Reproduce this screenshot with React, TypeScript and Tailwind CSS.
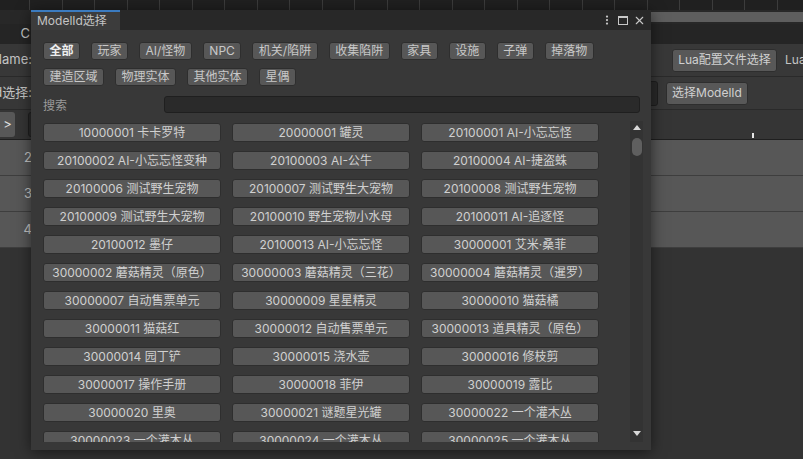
import { X, MoreVertical } from 'lucide-react';

const tagsRow1 = ['全部', '玩家', 'AI/怪物', 'NPC', '机关/陷阱', '收集陷阱', '家具', '设施', '子弹', '掉落物'];
const tagsRow2 = ['建造区域', '物理实体', '其他实体', '星偶'];

const items = [
  '10000001 卡卡罗特', '20000001 罐灵', '20100001 AI-小忘忘怪',
  '20100002 AI-小忘忘怪变种', '20100003 AI-公牛', '20100004 AI-捷盗蛛',
  '20100006 测试野生宠物', '20100007 测试野生大宠物', '20100008 测试野生宠物',
  '20100009 测试野生大宠物', '20100010 野生宠物小水母', '20100011 AI-追逐怪',
  '20100012 墨仔', '20100013 AI-小忘忘怪', '30000001 艾米·桑菲',
  '30000002 蘑菇精灵（原色）', '30000003 蘑菇精灵（三花）', '30000004 蘑菇精灵（暹罗）',
  '30000007 自动售票单元', '30000009 星星精灵', '30000010 猫菇橘',
  '30000011 猫菇红', '30000012 自动售票单元', '30000013 道具精灵（原色）',
  '30000014 园丁铲', '30000015 浇水壶', '30000016 修枝剪',
  '30000017 操作手册', '30000018 菲伊', '30000019 露比',
  '30000020 里奥', '30000021 谜题星光罐', '30000022 一个灌木丛',
  '30000023 一个灌木丛', '30000024 一个灌木丛', '30000025 一个灌木丛',
];

function Tag({ label, active }: { label: string; active?: boolean }) {
  return (
    <div
      className={`h-[18px] px-[5.5px] flex items-center rounded-[3px] border border-[#2e2e2e] bg-[#575757] text-[12px] leading-none whitespace-nowrap ${
        active ? 'font-bold text-[#eeeeee]' : 'text-[#c8c8c8]'
      }`}
    >
      {label}
    </div>
  );
}

function ModelIdWindow() {
  return (
    <div className="absolute left-[31px] top-[10px] w-[620px] h-[440px] flex flex-col bg-[#383838] shadow-[0_2px_14px_rgba(0,0,0,0.55)]">
      {/* tab header */}
      <div className="h-[20px] flex items-stretch bg-[#282828]">
        <div className="w-[89px] bg-[#3c3c3c] border-t-2 border-[#3b7bc0] flex items-center pl-[6px] text-[12px] text-[#c4c4c4]">
          ModelId选择
        </div>
        <div className="flex-1" />
        <div className="flex items-center gap-[5px] pr-[5px] text-[#c8c8c8]">
          <MoreVertical className="w-[12px] h-[12px]" strokeWidth={2.5} />
          <div className="w-[10px] h-[9px] border border-[#c8c8c8] border-t-2" />
          <X className="w-[13px] h-[13px]" strokeWidth={2} />
        </div>
      </div>

      {/* body */}
      <div className="flex-1 flex flex-col pl-[12px] pt-[12px]">
        <div className="flex gap-[11px]">
          {tagsRow1.map((t, i) => (
            <Tag key={t} label={t} active={i === 0} />
          ))}
        </div>
        <div className="flex gap-[11px] mt-[8px]">
          {tagsRow2.map((t) => (
            <Tag key={t} label={t} />
          ))}
        </div>

        <div className="flex items-center mt-[10px] h-[17px]">
          <div className="w-[121px] pt-[3px] text-[12px] text-[#9a9a9a]">搜索</div>
          <div className="w-[476px] h-[17px] rounded-[3px] bg-[#2a2a2a] border border-[#1f1f1f]" />
        </div>

        <div className="flex mt-[8px] h-[321px]">
          <div className="w-[556px] h-full overflow-hidden pt-[2px]">
            <div className="grid grid-cols-3 gap-x-[11px] gap-y-[9px]">
              {items.map((it) => (
                <div
                  key={it}
                  className="h-[19px] rounded-[3px] border border-[#2e2e2e] bg-[#575757] flex items-center justify-center text-[12px] text-[#d0d0d0] whitespace-nowrap"
                >
                  {it}
                </div>
              ))}
            </div>
          </div>
          <div className="ml-[31px] w-[13px] h-full bg-[#333333] flex flex-col items-center">
            <div className="mt-[4px] w-0 h-0 border-l-[4px] border-r-[4px] border-b-[5px] border-l-transparent border-r-transparent border-b-[#d8d8d8]" />
            <div className="mt-[8px] w-[10px] h-[18px] rounded-full bg-[#5f5f5f]" />
            <div className="flex-1" />
            <div className="mb-[6px] w-0 h-0 border-l-[4px] border-r-[4px] border-t-[5px] border-l-transparent border-r-transparent border-t-[#d8d8d8]" />
          </div>
        </div>
      </div>
    </div>
  );
}

export default function App() {
  const ticks = Array.from({ length: 25 });
  return (
    <div
      className="relative w-[803px] h-[459px] overflow-hidden bg-[#333333] text-[#c4c4c4]"
      style={{ fontFamily: 'Inter, "Noto Sans CJK SC", sans-serif' }}
    >
      {/* timeline ticks */}
      <div className="h-[10px] flex bg-[#202020]">
        <div className="w-[30px] shrink-0 border-r border-[#3c3c3c]" />
        {ticks.map((_, i) => (
          <div key={i} className="w-[32.5px] shrink-0 border-r border-[#3c3c3c]" />
        ))}
      </div>
      {/* horizontal scroller */}
      <div className="h-[14px] bg-[#282828] flex items-center">
        <div className="ml-[400px] flex-1 h-[10px] bg-[#5e5e5e]" />
      </div>
      {/* toolbar row */}
      <div className="h-[20px] bg-[#252525] flex items-center">
        <div className="w-[31px] flex justify-end pr-[1px] text-[13px]">C</div>
      </div>
      {/* Name row */}
      <div className="h-[33px] bg-[#383838] border-b border-[#2a2a2a] flex items-center overflow-hidden">
        <div className="w-[32px] shrink-0 flex justify-end overflow-hidden whitespace-nowrap text-[13px]">Name:</div>
        <div className="w-[640px] shrink-0" />
        <div className="w-[105px] shrink-0 h-[23px] rounded-[3px] bg-[#585858] border border-[#2e2e2e] flex items-center justify-center text-[12px] text-[#d0d0d0] whitespace-nowrap">
          Lua配置文件选择
        </div>
        <div className="ml-[8px] text-[12px] whitespace-nowrap">Lua</div>
      </div>
      {/* select row */}
      <div className="h-[33px] bg-[#383838] border-b border-[#2a2a2a] flex items-center overflow-hidden">
        <div className="w-[32px] shrink-0 flex justify-end overflow-hidden whitespace-nowrap text-[13px]">Id选择:</div>
        <div className="w-[626px] shrink-0 h-[25px] rounded-[3px] bg-[#2a2a2a] border border-[#1f1f1f]" />
        <div className="ml-[8px] w-[82px] shrink-0 h-[23px] rounded-[3px] bg-[#585858] border border-[#2e2e2e] flex items-center justify-center text-[12px] text-[#d0d0d0] whitespace-nowrap">
          选择ModelId
        </div>
      </div>
      {/* nav row */}
      <div className="h-[30px] bg-[#353535] border-b border-[#1f1f1f] flex items-center relative">
        <div className="w-[15px] h-[25px] bg-[#585858] rounded-r-[3px] flex items-center justify-center text-[13px] text-[#e0e0e0]">&gt;</div>
        <div className="ml-[13px] w-[6px] h-[25px] rounded-l-[3px] bg-[#2a2a2a] border border-[#1f1f1f]" />
        <div className="absolute left-[752px] bottom-[1px] w-[2px] h-[5px] bg-[#e6e6e6]" />
      </div>
      {/* data rows */}
      {['2', '3', '4'].map((n) => (
        <div key={n} className="h-[36px] bg-[#575757] border-b border-[#3e3e3e] flex items-center">
          <div className="w-[32px] flex justify-end overflow-hidden text-[13px] text-[#c8c8c8]">{n}</div>
        </div>
      ))}

      <ModelIdWindow />
    </div>
  );
}
